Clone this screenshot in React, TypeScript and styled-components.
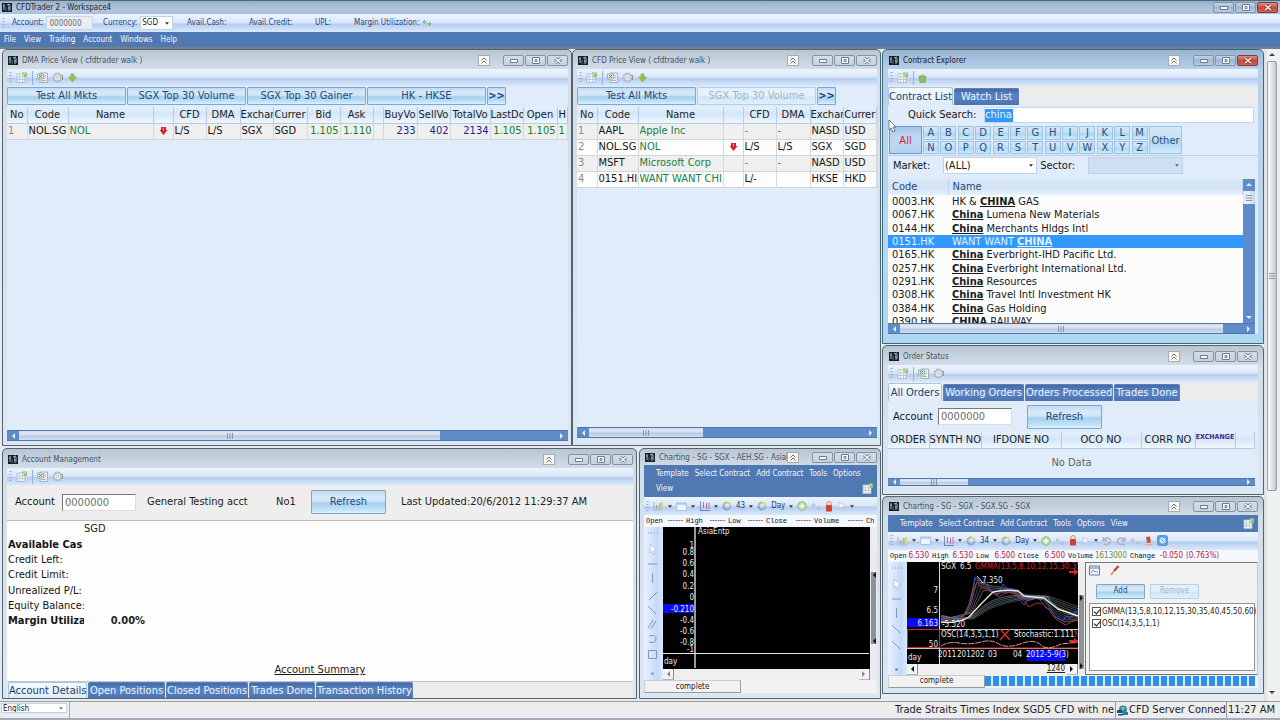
import React from 'react';
import styled, { createGlobalStyle, css } from 'styled-components';

const tahoma = '"DejaVu Sans Condensed", "DejaVu Sans", Tahoma, sans-serif';
const mono = '"Liberation Mono", monospace';

const bar = 'linear-gradient(#edf4fe 0%, #d9e6fa 48%, #b6cced 56%, #cadcf7 80%, #d9e8fd 100%)';
const glass = 'linear-gradient(#c3d9ee 0%, #d6e9fa 25%, #cfe6f9 45%, #a9cfee 55%, #bfe3f8 85%, #d8f3fd 100%)';
const tabBlue = 'linear-gradient(#4468a8 0%, #5c86c4 45%, #4a72b2 100%)';

const Global = createGlobalStyle`
  * { box-sizing: border-box; }
  body { margin: 0; background: #dce9f7; font-family: ${tahoma}; font-size: 11px; line-height: 14px; color: #222; }
  button, input, select { font: inherit; margin: 0; padding: 0; border: 0; border-radius: 0; background: none; color: inherit; }
  svg { display: block; flex: none; }
`;

/* ---------- shell ---------- */

const Page = styled.div`
  min-height: 100vh;
  display: flex;
  flex-direction: column;
`;

const AppTitle = styled.header`
  height: 14px;
  border-top: 1px solid #4c6a80;
  display: flex;
  align-items: center;
  padding: 0 2px;
  background: linear-gradient(#9ab0ca, #b2c5dc 60%, #a8c1e0);
  font: 8px/12px ${tahoma};
  color: #1d2530;
`;

const AppBar = styled.div`
  height: 18px;
  display: flex;
  align-items: center;
  padding-left: 2px;
  background: ${bar};
  font: 8px/12px ${tahoma};
  color: #24477c;
`;

const BarItem = styled.div<{ $w: number }>`
  width: ${p => p.$w}px;
  display: flex;
  align-items: center;
  gap: 3px;
  white-space: nowrap;
`;

const BarLabel = styled.label`
  padding-left: 4px;
`;

const Menu = styled.nav<{ $pad: number; $h: number }>`
  min-height: ${p => p.$h}px;
  display: flex;
  align-items: center;
  flex: none;
  padding: 0 3px 0 ${p => p.$pad}px;
  background: #5079b3;
  font: 8px/15px ${tahoma};
  color: #f2f7ff;
`;

const MenuItems = styled.div<{ $gap: number }>`
  flex: 1;
  display: flex;
  flex-wrap: wrap;
  column-gap: ${p => p.$gap}px;
`;

const MenuButton = styled.button`
  white-space: nowrap;
  line-height: 15px;
`;

const MenuCorner = styled.span`
  margin-left: auto;
  padding-top: 2px;
`;

const Desktop = styled.main`
  flex: 1;
  display: flex;
  border-top: 2px solid #7b7f86;
`;

const LeftArea = styled.div`
  flex: 1;
  min-width: 0;
  display: flex;
  flex-direction: column;
  gap: 2px;
  padding: 0 0 2px 2px;
  background: #e4eaf0;
`;

const Row = styled.div<{ $grow?: boolean; $gap?: number }>`
  display: flex;
  flex: ${p => (p.$grow ? '1 1 auto' : 'none')};
  gap: ${p => p.$gap ?? 0}px;
`;

const RightColumn = styled.div`
  width: 383px;
  display: flex;
  flex-direction: column;
  gap: 1px;
  padding-left: 1px;
  background: #e8edf2;
`;

const PageScroll = styled.div`
  width: 16px;
  display: flex;
  flex-direction: column;
  align-items: center;
  padding: 3px 0 6px;
  background: linear-gradient(90deg, #d9dee3, #f1f2f3 30%, #efefef);
`;

const PageThumb = styled.div`
  width: 10px;
  height: 430px;
  margin: 3px 0 auto;
  display: flex;
  align-items: center;
  justify-content: center;
  border: 1px solid #9b9fa4;
  border-radius: 2px;
  background: linear-gradient(90deg, #fafafa, #e4e4e6 50%, #c6c8cc);
`;

/* ---------- windows ---------- */

const Frame = styled.section<{ $flex?: number; $active?: boolean; $wide?: boolean; $foot: number }>`
  min-width: 0;
  flex: ${p => (p.$flex ? `${p.$flex} ${p.$flex} ${p.$flex}px` : 'none')};
  display: flex;
  flex-direction: column;
  padding: 0 ${p => (p.$wide ? 5 : 3)}px ${p => p.$foot}px ${p => (p.$wide ? 5 : 4)}px;
  border: 1px solid ${p => (p.$active ? '#2a6f86' : '#56636f')};
  border-radius: 5px 5px 0 0;
  background: ${p =>
    p.$active
      ? 'linear-gradient(#98b3d3, #b9d0ea 20px, #bdd6f0 60%, #b0d8f0)'
      : 'linear-gradient(#b8c6d3, #d3dee9 20px, #dbe7f3)'};
`;

const Caption = styled.div<{ $h: number; $active?: boolean }>`
  height: ${p => p.$h}px;
  flex: none;
  display: flex;
  align-items: center;
  padding-top: ${p => (p.$h > 16 ? 2 : 1)}px;
  padding-left: 1px;
  font: 8px/12px ${tahoma};
  color: ${p => (p.$active ? '#16202c' : '#46535f')};
`;

const CaptionText = styled.h2`
  flex: 1;
  min-width: 0;
  margin: 0 0 0 4px;
  overflow: hidden;
  white-space: nowrap;
  font: inherit;
`;

const Chevron = styled.button`
  width: 12px;
  height: 11px;
  flex: none;
  margin-right: 13px;
  display: grid;
  place-items: center;
  border: 1px solid #a4acb4;
  background: #f7f7ee;
`;

const Controls = styled.div`
  display: flex;
  gap: 1px;
  flex: none;
`;

const Control = styled.button<{ $red?: boolean; $hot?: boolean }>`
  width: 21px;
  height: 11px;
  display: grid;
  place-items: center;
  border: 1px solid ${p => (p.$red ? '#7c3a3c' : '#8594a5')};
  border-radius: 2px;
  background: ${p =>
    p.$red
      ? 'linear-gradient(#dc9186, #c8453a 55%, #d4664f)'
      : p.$hot
        ? 'linear-gradient(#c3d5ea, #9fb7d3 50%, #b5cde8)'
        : 'linear-gradient(#d3dde7, #c5d2df)'};
`;

const Tools = styled.div<{ $h: number }>`
  height: ${p => p.$h}px;
  flex: none;
  display: flex;
  align-items: center;
  gap: 4px;
  padding-left: 2px;
  overflow: hidden;
  background: ${bar};
  font: 8px/12px ${tahoma};
  color: #1e3c6e;
`;

const Divider = styled.span`
  width: 1px;
  height: 14px;
  background: #8fb2de;
`;

const Canvas = styled.div<{ $bg?: string }>`
  flex: 1;
  display: flex;
  flex-direction: column;
  min-width: 0;
  min-height: 0;
  background: ${p => p.$bg ?? '#e1ecfb'};
`;

const Inset = styled.div`
  padding-right: 3px;
`;

const GlassButton = styled.button<{ $w: number; $h: number; $faded?: boolean; $bold?: boolean; $small?: boolean }>`
  width: ${p => p.$w}px;
  height: ${p => p.$h}px;
  flex: none;
  overflow: hidden;
  border: 1px solid ${p => (p.$faded ? '#b5cfe9' : '#7ba7d3')};
  border-radius: 1px;
  background: ${glass};
  color: #1c4a7a;
  white-space: nowrap;
  line-height: 14px;
  ${p => p.$small && css`font: 8px/10px ${tahoma};`}
  ${p => p.$bold && css`font-weight: bold; color: #1a4087;`}
  ${p => p.$faded && css`background: linear-gradient(#e3eefa, #e6f2fc 45%, #d3e6f7 55%, #def0fb); color: #a3b4c8;`}
`;

const MarketButtons = styled.div`
  display: flex;
  gap: 1px;
  height: 21px;
  flex: none;
  padding-top: 1px;
`;

/* ---------- grids ---------- */

const Grid = styled.table`
  width: 100%;
  table-layout: fixed;
  border-collapse: collapse;
`;

const HeadCell = styled.th<{ $small?: boolean }>`
  height: 16px;
  padding: 0;
  overflow: hidden;
  border-right: 1px solid #b7cbe2;
  border-bottom: 1px solid #b7cbe2;
  background: linear-gradient(#e3effd, #d5e6f8 45%, #dcebfa 60%, #eef6fe);
  font-weight: ${p => (p.$small ? 'bold' : 'normal')};
  font-size: ${p => (p.$small ? 7 : 11)}px;
  line-height: ${p => (p.$small ? 10 : 14)}px;
  vertical-align: ${p => (p.$small ? 'top' : 'middle')};
  color: ${p => (p.$small ? '#4a2a90' : '#1c1c24')};
  white-space: nowrap;
`;

const Cell = styled.td<{ $color?: string; $right?: boolean; $alt?: boolean }>`
  height: 16px;
  padding: 0 1px;
  overflow: hidden;
  border-right: 1px solid #d5d9de;
  border-bottom: 1px solid #cfd5dc;
  background: ${p => (p.$alt ? '#efefef' : '#fdfdfd')};
  color: ${p => p.$color ?? '#151515'};
  text-align: ${p => (p.$right ? 'right' : 'left')};
  white-space: nowrap;
  line-height: 14px;
`;

const Clip = styled.div`
  overflow: hidden;
`;

const Mark = styled.span`
  display: flex;
  justify-content: center;
`;

/* ---------- scroll bars ---------- */

const HTrack = styled.div<{ $h: number }>`
  height: ${p => p.$h}px;
  flex: none;
  display: flex;
  background: #5f8bc8;
  border-top: 1px solid #4e76b0;
  border-bottom: 1px solid #4e76b0;
`;

const ArrowBox = styled.button`
  width: 12px;
  min-height: 6px;
  flex: none;
  display: grid;
  place-items: center;
`;

const UpDownBox = styled(ArrowBox)`
  height: 12px;
`;

const HThumb = styled.div<{ $share: number }>`
  flex: ${p => p.$share} ${p => p.$share} 0;
  display: flex;
  align-items: center;
  justify-content: center;
  background: linear-gradient(#cfdcee, #e1e9f4 30%, #b9cbe3 60%, #d3dff0);
`;

const HRest = styled.div<{ $share: number }>`
  flex: ${p => p.$share} ${p => p.$share} 0;
`;

const VTrack = styled.div`
  width: 12px;
  flex: none;
  display: flex;
  flex-direction: column;
  background: #5f8bc8;
`;

const VThumb = styled.div`
  height: 13px;
  margin-bottom: auto;
  display: grid;
  place-items: center;
  background: linear-gradient(90deg, #d8e3f1, #eef3f9 40%, #c3d2e6);
`;

/* ---------- tabs and forms ---------- */

const TabStrip = styled.div<{ $bottom?: boolean }>`
  height: ${p => (p.$bottom ? 17 : 19)}px;
  flex: none;
  display: flex;
  align-items: flex-end;
  gap: 1px;
  background: #ececec;
  ${p => p.$bottom && css`border-top: 1px solid #b9c6d4; padding-left: 1px;`}
`;

const Tab = styled.button<{ $on?: boolean; $w: number }>`
  width: ${p => p.$w}px;
  height: ${p => (p.$on ? 18 : 17)}px;
  max-height: 100%;
  flex: none;
  white-space: nowrap;
  border: 1px solid ${p => (p.$on ? '#a9c4e2' : '#5c7fb6')};
  border-bottom: 0;
  border-radius: 2px 2px 0 0;
  background: ${p => (p.$on ? 'linear-gradient(#f4faff, #dfecfa)' : tabBlue)};
  color: ${p => (p.$on ? '#1b3d6d' : '#edf5ff')};
`;

const Line = styled.div<{ $h: number; $pad: number; $top?: boolean }>`
  height: ${p => p.$h}px;
  flex: none;
  display: flex;
  align-items: center;
  padding-left: ${p => p.$pad}px;
  white-space: nowrap;
  ${p => p.$top && css`border-top: 1px solid #b7cfe8; padding-bottom: 4px;`}
`;

const Label = styled.label<{ $w: number }>`
  width: ${p => p.$w}px;
  flex: none;
  color: #161616;
`;

const Field = styled.input<{ $w: number; $h: number; $sunk?: boolean; $tint?: boolean }>`
  width: ${p => p.$w}px;
  flex: none;
  height: ${p => p.$h}px;
  padding-left: 2px;
  background: ${p => (p.$tint ? '#e9eef4' : '#fff')};
  color: ${p => (p.$sunk || p.$tint ? '#6c6c6c' : '#111')};
  border: 1px solid #c4d6ea;
  ${p => p.$sunk && css`border-color: #777 #ddd #ddd #777;`}
`;

const Search = styled.div`
  flex: 1;
  height: 16px;
  margin-right: 4px;
  display: flex;
  align-items: center;
  background: #fff;
  border: 1px solid #c4d6ea;
`;

const SearchInput = styled.input`
  width: 28px;
  height: 13px;
  background: #3397f6;
  color: #e9f5ff;
`;

const Picker = styled.span<{ $w: number; $h: number; $off?: boolean }>`
  width: ${p => p.$w}px;
  height: ${p => p.$h}px;
  flex: none;
  display: flex;
  align-items: center;
  padding-right: 3px;
  border: 1px solid #bcd3ec;
  background: ${p => (p.$off ? '#cfdff1' : '#fff')};
  color: #1a1a1a;
`;

const Select = styled.select`
  flex: 1;
  min-width: 0;
  height: 100%;
  padding-left: 1px;
  appearance: none;
  outline: 0;
`;

const Letters = styled.div`
  height: 30px;
  flex: none;
  display: flex;
  gap: 1px;
  padding: 1px 0 1px 1px;
`;

const LetterGrid = styled.div`
  width: 225px;
  display: grid;
  grid-template-columns: repeat(13, 1fr);
  gap: 1px;
`;

const Letter = styled.button<{ $tall?: boolean; $red?: boolean }>`
  width: ${p => (p.$tall ? 33 : 16)}px;
  border: 1px solid ${p => (p.$red ? '#6a96c8' : '#9cc2e6')};
  background: ${p =>
    p.$red ? 'linear-gradient(#a5c4e6, #c0d9f2 40%, #b4d3f0)' : 'linear-gradient(#d3e7f9, #c8e0f6 45%, #b0d4f1 55%, #cdebfb)'};
  color: ${p => (p.$red ? '#d5202c' : '#24507f')};
  line-height: 11px;
`;

const ListRow = styled.tr<{ $on?: boolean }>`
  background: ${p => (p.$on ? '#3398fb' : '#fcfcfc')};
  color: ${p => (p.$on ? '#e3f2ff' : '#1a1a1a')};
`;

const ListCell = styled.td`
  padding: 0 0 0 4px;
  line-height: 13px;
  white-space: nowrap;
`;

const ListHead = styled.th`
  height: 16px;
  padding: 0 0 0 4px;
  text-align: left;
  font-weight: normal;
  color: #24477c;
  border-right: 1px solid #bed2e9;
  background: linear-gradient(#dbe8f7, #d2e3f6 50%, #e6f2fd);
`;

const ListArea = styled.div`
  display: flex;
  height: 144px;
  overflow: hidden;
  background: #fcfcfc;
`;

const ListScroll = styled.div`
  flex: 1;
  overflow: hidden;
`;

const ListTable = styled.table`
  width: 100%;
  height: 149px;
  table-layout: fixed;
  border-collapse: collapse;
`;

const Hit = styled.b`
  text-decoration: underline;
`;

const Empty = styled.div`
  height: 29px;
  display: grid;
  place-items: center;
  color: #5c6570;
`;

const Facts = styled.table`
  height: 92px;
  width: 150px;
  table-layout: fixed;
  border-collapse: collapse;
`;

const FactName = styled.th<{ $strong?: boolean }>`
  padding: 0 0 0 1px;
  overflow: hidden;
  text-align: left;
  white-space: nowrap;
  font-weight: ${p => (p.$strong ? 'bold' : 'normal')};
  color: #151515;
`;

const FactValue = styled.td`
  padding: 0 12px 0 0;
  text-align: right;
  font-weight: bold;
`;

const CurrencyHead = styled.div`
  padding: 1px 0 0 77px;
  height: 16px;
`;

const Summary = styled.a`
  align-self: center;
  margin: auto 0 4px;
  color: #1a1a1a;
`;

/* ---------- charts ---------- */

const Metrics = styled.dl<{ $cols: string }>`
  height: 12px;
  flex: none;
  margin: 0;
  padding-left: 2px;
  display: grid;
  grid-template-columns: ${p => p.$cols};
  align-items: center;
  overflow: hidden;
  background: #f4f8fe;
`;

const Metric = styled.div`
  display: flex;
  align-items: center;
  justify-content: space-between;
  padding-right: 3px;
  white-space: nowrap;
  &:last-child { justify-content: flex-start; }
`;

const MetricName = styled.dt`
  font: 7px/10px ${mono};
  color: #111;
`;

const MetricValue = styled.dd<{ $color?: string }>`
  margin: 0;
  font: 8px/10px ${tahoma};
  color: ${p => p.$color ?? '#3a4a60'};
`;

const ChartBody = styled.div<{ $h: number }>`
  height: ${p => p.$h}px;
  flex: none;
  display: flex;
  background: #f0f0f0;
`;

const DrawTools = styled.div`
  width: 19px;
  flex: none;
  padding: 3px 0;
  background: linear-gradient(90deg, #e9f2fe, #c3d9f8 70%, #dce8fb);
`;

const Plot = styled.div`
  flex: 1;
  min-width: 0;
  display: flex;
  flex-direction: column;
`;

const PlotCanvas = styled.div`
  flex: 1;
  overflow: hidden;
  background: #000;
`;

const PlotScroll = styled.div`
  height: 11px;
  flex: none;
  display: flex;
  justify-content: space-between;
  align-items: center;
  background: #efefef;
  color: #222;
  font-size: 8px;
`;

const PlotCount = styled.span`
  margin-left: auto;
  margin-right: 2px;
  text-decoration: underline;
`;

const StepButton = styled.button`
  width: 11px;
  height: 11px;
  display: grid;
  place-items: center;
  border-right: 1px solid #8a8a8a;
  border-bottom: 1px solid #b5b5b5;
  background: #f3f3f3;
`;

const Splitter = styled.div`
  width: 7px;
  flex: none;
  display: flex;
  flex-direction: column;
  align-items: center;
  justify-content: flex-end;
  background: #ececec;
`;

const SplitGrip = styled.div<{ $h: number; $gap: number }>`
  width: 5px;
  height: ${p => p.$h}px;
  margin-bottom: ${p => p.$gap}px;
  display: flex;
  flex-direction: column;
  justify-content: space-between;
  background: #8d9299;
`;

const Side = styled.div`
  width: 173px;
  flex: none;
  display: flex;
  flex-direction: column;
  border: 1px solid #777;
  border-right-color: #c9c9c9;
  background: #f2f2f2;
`;

const SideTabs = styled.div`
  display: flex;
  gap: 9px;
  height: 17px;
  padding: 2px 3px;
`;

const SideButtons = styled.div`
  display: flex;
  gap: 5px;
  padding: 4px 10px;
`;

const Checks = styled.div`
  flex: 1;
  margin: 0 2px 3px 3px;
  padding: 2px;
  border: 1px solid #8e9298;
  background: #fff;
`;

const Check = styled.label`
  display: flex;
  align-items: center;
  gap: 1px;
  height: 12px;
  font: 8px/10px ${tahoma};
  white-space: nowrap;
`;

const Tick = styled.input`
  width: 9px;
  height: 9px;
  flex: none;
  display: grid;
  place-items: center;
  appearance: none;
  border: 1px solid #555;
  background: #fff;
  &:checked::after {
    content: '';
    width: 3px;
    height: 5px;
    margin-bottom: 2px;
    border: solid #111;
    border-width: 0 1px 1px 0;
    transform: rotate(40deg);
  }
`;

const ChartFoot = styled.div`
  height: 13px;
  flex: none;
  display: flex;
  align-items: center;
  background: #f2f2f2;
`;

const State = styled.div`
  width: 97px;
  height: 13px;
  flex: none;
  display: grid;
  place-items: center;
  border: 1px solid;
  border-color: #ccc #9a9a9a #9a9a9a #ccc;
  font: 8px/10px ${tahoma};
  color: #222;
`;

const Progress = styled.div`
  flex: 1;
  height: 10px;
  margin-right: 3px;
  background: repeating-linear-gradient(90deg, #2f8fe8 0 6px, #dbe7f3 6px 8px);
`;

/* ---------- account strip ---------- */

const Strip = styled.form`
  height: 36px;
  flex: none;
  padding: 0 0 1px 8px;
  display: flex;
  align-items: center;
  white-space: nowrap;
  background: #eee;
  border-bottom: 1px solid #bbb;
`;

const Text = styled.span<{ $w: number }>`
  width: ${p => p.$w}px;
  flex: none;
`;

const ButtonHolder = styled.span`
  display: flex;
  padding: 0 15px;
`;

/* ---------- status bar ---------- */

const Status = styled.footer`
  height: 19px;
  flex: none;
  display: flex;
  align-items: stretch;
  background: #ededed;
  border-top: 1px solid #9c9c9c;
  border-bottom: 2px solid #a6a8bc;
  white-space: nowrap;
  color: #1c1c28;
`;

const Ticker = styled.div`
  flex: 1;
  display: flex;
  justify-content: flex-end;
  align-items: center;
  padding-right: 1px;
  border-left: 1px solid #aaa;
`;

const StatusCell = styled.div<{ $w: number }>`
  width: ${p => p.$w}px;
  flex: none;
  display: flex;
  align-items: center;
  gap: 1px;
  overflow: hidden;
  padding-left: 1px;
  border-left: 1px solid #999;
`;

const Language = styled.div`
  width: 69px;
  padding: 1px;
  font: 8px/9px ${tahoma};
`;

const Pointer = styled.svg`
  position: absolute;
  left: 0;
  top: 14px;
  z-index: 2;
`;

const Anchor = styled.div`
  position: relative;
  display: flex;
  flex-direction: column;
`;

/* ---------- drawings ---------- */

const Logo = () => (
  <svg width="10" height="9" viewBox="0 0 10 9" aria-hidden="true">
    <path d="M0 0h10v9H0z" fill="#16202b" />
    <path d="M2 1v6M1 3h2M7 1v7M5 2l3-1M6 5h2" stroke="#a9b8c4" />
    <path d="M4 4v4M8.500 2v5" stroke="#4b6c88" />
  </svg>
);

const Caret = ({ color = '#333' }: { color?: string }) => (
  <svg width="4" height="3" viewBox="0 0 5 3" aria-hidden="true">
    <path d="M0 0h5L2.500 3z" fill={color} />
  </svg>
);

const Grip = () => (
  <svg width="3" height="11" viewBox="0 0 3 11" aria-hidden="true">
    <path d="M1.500 0v11" stroke="#8aa9d4" strokeWidth="2" strokeDasharray="1 2" />
  </svg>
);

const SheetIcon = () => (
  <svg width="12" height="11" viewBox="0 0 12 11" aria-hidden="true">
    <path d="M1 2h8v8.500H1z" fill="#fafcff" stroke="#b1bdc8" />
    <path d="M1 5h8M1 7.500h8M3.500 3v7M6.500 3v7" stroke="#bcc9d5" />
    <path d="M6 .5h5V5H8z" fill="#8cc46b" />
    <path d="M7 3l3-2" stroke="#d8f0c6" />
  </svg>
);

const ExcelIcon = () => (
  <svg width="11" height="11" viewBox="0 0 11 11" aria-hidden="true">
    <path d="M3 1h7.500v9.500H3z" fill="#eef3f6" stroke="#a3afb8" />
    <path d="M.5 2h6v5h-6z" fill="#dfeadf" stroke="#9eb4a4" />
    <path d="M2 3l3 3M5 3L2 6" stroke="#5f8a68" />
    <path d="M7 4h2M7 6h2M4 8.500h5" stroke="#aab4bc" />
  </svg>
);

const GearIcon = () => (
  <svg width="12" height="11" viewBox="0 0 12 11" aria-hidden="true">
    <circle cx="5.500" cy="5.500" r="4.500" fill="none" stroke="#9aa5ae" strokeDasharray="2 1" />
    <circle cx="5.500" cy="5.500" r="3.500" fill="#eff3f6" stroke="#aeb7bf" />
    <circle cx="5.500" cy="5.500" r="1.500" fill="none" stroke="#b8c0c7" />
    <path d="M10.500 3v5" stroke="#8b969f" />
  </svg>
);

const DownIcon = () => (
  <svg width="9" height="10" viewBox="0 0 9 10" aria-hidden="true">
    <path d="M3 1h3v3h2.500L4.500 9 .5 4H3z" fill="#8cc63e" stroke="#7fae55" strokeWidth=".6" />
  </svg>
);

const BasketIcon = () => (
  <svg width="9" height="10" viewBox="0 0 9 10" aria-hidden="true">
    <path d="M1 3.500h7L7 9.500H2z" fill="#8fbf4c" stroke="#74a03f" strokeWidth=".7" />
    <path d="M2.500 3.500Q4.500 0 6.500 3.500" fill="none" stroke="#86a660" />
  </svg>
);

const RedDown = () => (
  <svg width="9" height="8" viewBox="0 0 9 8" aria-hidden="true">
    <path d="M2 0h5v3H8.500L4.500 8 .5 3H2z" fill="#d3202f" />
    <path d="M3.500 1h1v3" stroke="#f08f92" fill="none" />
  </svg>
);

const SyncIcon = () => (
  <svg width="10" height="8" viewBox="0 0 10 8" aria-hidden="true">
    <path d="M1 3h4M3 1L1 3l2 2M9 5H5M7 3l2 2-2 2" fill="none" stroke="#76a96a" />
  </svg>
);

const Arrow = ({ dir, color = '#e4efff' }: { dir: 'l' | 'r' | 'u' | 'd'; color?: string }) => {
  const d = { l: 'M5 0v6L2 3z', r: 'M1 0v6l3-3z', u: 'M0 4h6L3 1z', d: 'M0 2h6L3 5z' }[dir];
  return (
    <svg width="6" height="6" viewBox="0 0 6 6" aria-hidden="true">
      <path d={d} fill={color} />
    </svg>
  );
};

const GripMark = ({ vertical }: { vertical?: boolean }) => (
  <svg width="6" height="6" viewBox="0 0 6 6" aria-hidden="true">
    <path d={vertical ? 'M0 .5h6M0 3h6M0 5.500h6' : 'M.5 0v6M3 0v6M5.500 0v6'} stroke="#8595aa" />
  </svg>
);

const DonutIcon = () => (
  <svg width="10" height="10" viewBox="0 0 10 10" aria-hidden="true">
    <g fill="none" strokeWidth="2">
      <path d="M5 1.500A3.500 3.500 0 0 1 8.500 5" stroke="#e9d26c" />
      <path d="M8.500 5A3.500 3.500 0 0 1 5 8.500" stroke="#7fb6e8" />
      <path d="M5 8.500A3.500 3.500 0 0 1 1.500 5" stroke="#a58fe0" />
      <path d="M1.500 5A3.500 3.500 0 0 1 5 1.500" stroke="#8fce86" />
    </g>
  </svg>
);

const BarsIcon = () => (
  <svg width="11" height="10" viewBox="0 0 11 10" aria-hidden="true">
    <path d="M1 1v8h9" stroke="#a9b6c8" fill="none" />
    <path d="M3 8V4h1.500v4M6 8V2h1.500v6" fill="#9db886" />
    <path d="M9 1v7" stroke="#e8d268" strokeWidth="2" />
  </svg>
);

const PaneIcon = () => (
  <svg width="11" height="9" viewBox="0 0 11 9" aria-hidden="true">
    <path d="M.5 1h10v7.500H.5z" fill="#eef4fd" stroke="#aec1df" />
    <path d="M1 2h9" stroke="#8fb0e4" />
  </svg>
);

const CandleIcon = () => (
  <svg width="11" height="10" viewBox="0 0 11 10" aria-hidden="true">
    <path d="M1.500 0v10M10 1v7" stroke="#8d86c4" />
    <path d="M4.500 1v6M7.500 2v6" stroke="#d0628e" />
    <path d="M1 9.500h10" stroke="#6f82b8" />
  </svg>
);

const PlusIcon = () => (
  <svg width="10" height="10" viewBox="0 0 10 10" aria-hidden="true">
    <circle cx="5" cy="5" r="4.300" fill="#b4dba6" stroke="#8dc07c" />
    <path d="M5 2.500v5M2.500 5h5" stroke="#fff" strokeWidth="1.500" />
  </svg>
);

const LinkIcon = () => (
  <svg width="10" height="10" viewBox="0 0 10 10" aria-hidden="true">
    <path d="M1 4h4M3 2L1 4l2 2M9 7H5M7 5l2 2-2 2" fill="none" stroke="#b3bccb" />
  </svg>
);

const LockIcon = () => (
  <svg width="8" height="11" viewBox="0 0 8 11" aria-hidden="true">
    <path d="M2 5V2.500a2 2 0 0 1 4 0V5" fill="none" stroke="#d98a52" />
    <rect x="1" y="4" width="6" height="6.500" rx="1" fill="#d2432c" />
  </svg>
);

const PointIcon = () => (
  <svg width="9" height="10" viewBox="0 0 9 10" aria-hidden="true">
    <path d="M2 1v7l2-2 1.500 3 1-.6L5.500 6H8z" fill="#fff" stroke="#a9b6cc" strokeWidth=".7" />
  </svg>
);

const UndoIcon = () => (
  <svg width="10" height="10" viewBox="0 0 10 10" aria-hidden="true">
    <path d="M1 1v3.500h4M1.500 4Q5 0 8.500 4v2Q8 8 5 8.500H2" fill="none" stroke="#b9aeb6" strokeWidth="1.300" />
  </svg>
);

const RedoIcon = () => (
  <svg width="10" height="10" viewBox="0 0 10 10" aria-hidden="true">
    <path d="M9 1v3.500H5M8.500 4Q5 0 1.500 4v2Q2 8 5 8.500h4" fill="none" stroke="#b9aeb6" strokeWidth="1.300" />
  </svg>
);

const FlagIcon = () => (
  <svg width="9" height="10" viewBox="0 0 9 10" aria-hidden="true">
    <path d="M2 1l4-.5 1 6-4 .5z" fill="#d8483c" />
    <path d="M1 8h7v1.500H1z" fill="#e8a69c" />
  </svg>
);

const BlueIcon = () => (
  <svg width="11" height="11" viewBox="0 0 11 11" aria-hidden="true">
    <rect x=".5" y=".5" width="10" height="10" rx="2" fill="#5aa0e6" stroke="#5b97d8" />
    <circle cx="5.500" cy="5.500" r="3" fill="#d4e9fb" />
    <path d="M4 4l3 3" stroke="#5b93cf" />
  </svg>
);

const EarthIcon = () => (
  <svg width="11" height="11" viewBox="0 0 11 11" aria-hidden="true">
    <circle cx="6" cy="4.500" r="4" fill="#2b8a9a" />
    <path d="M4 2h4v2L5 6z" fill="#6cc08a" />
    <path d="M0 5h5v3H0zM1 9h5v1.500H1z" fill="#1d4f73" />
    <path d="M6 7h5v3H6z" fill="#3273a0" />
  </svg>
);

const PictureIcon = () => (
  <svg width="11" height="11" viewBox="0 0 11 11" aria-hidden="true">
    <path d="M.5 1h10v9H.5z" fill="#f3f7fb" stroke="#5a7fae" />
    <path d="M1 3h9" stroke="#5a7fae" />
    <path d="M2 8l2-3 2 2 1-1 2 2" fill="none" stroke="#7a9bc4" />
  </svg>
);

const BrushIcon = () => (
  <svg width="11" height="11" viewBox="0 0 11 11" aria-hidden="true">
    <path d="M9.500 1L5 6" stroke="#c63b2c" strokeWidth="2" />
    <path d="M5 6L2 10" stroke="#d9a178" strokeWidth="2" />
  </svg>
);

const DrawGlyphs = ({ h }: { h: number }) => (
  <svg width="17" height={h} viewBox={`0 0 17 ${h}`} aria-hidden="true">
    <g fill="none" stroke="#8296bd">
      <path d="M4 3h10" strokeDasharray="1 2" />
      <path d="M6 14v9l2-2 2 4 1-1-1-4h3z" fill="#fff" stroke="#b5c4dc" />
      <path d="M4 34h9M8.500 43v10" />
      {h > 120 ? (
        <>
          <path d="M5 70l8-8M4 76l8 8" />
          <path d="M4 98l5-8M7 99l5-8M5 106q7-2 7 3t-7 3M4.500 120.500h8v8h-8z" />
          <path d="M7 143h3l-1.500 2z" />
        </>
      ) : (
        <>
          <path d="M4 60l8 8M4 76l8 8" />
          <path d="M7 104h3l-1.500 2z" fill="#445" />
        </>
      )}
    </g>
  </svg>
);

const asiaScale: [string, number][] = [
  ['1', 21], ['0.8', 28], ['0.6', 39], ['0.4', 50], ['0.2', 62], ['0', 73],
  ['-0.210', 85], ['-0.4', 96], ['-0.6', 107], ['-0.8', 118], ['-1', 125],
];

const AsiaPlot = () => (
  <svg width="206" height="141" viewBox="0 0 206 141" role="img" aria-label="AsiaEntp day chart">
    <path d="M32 0v141" stroke="#9a9a9a" strokeWidth="2" />
    <path d="M0 126.500h206" stroke="#e6e6e6" />
    <path d="M0 77h31v9H0z" fill="#0a0aff" />
    <g fill="#ececec" fontFamily={tahoma} fontSize="8">
      <text x="35" y="7">AsiaEntp</text>
      <g textAnchor="end">
        {asiaScale.map(([t, y]) => <text key={t} x="31" y={y}>{t}</text>)}
      </g>
      <text x="1" y="137">day</text>
    </g>
  </svg>
);

const slow = [0, 1, 2, 3, 4];
const fast = [0, 1, 2, 3, 4];
const slowColors = ['#7b8f88', '#5f7d78', '#4d6f87', '#7a7390', '#56695f'];
const fastColors = ['#5f8f6b', '#4f7f86', '#3f62a8', '#8a5a70', '#6f8a5c'];

const SgxPlot = () => (
  <svg width="172" height="102" viewBox="0 0 172 102" role="img" aria-label="SGX day chart">
    <path d="M32.500 0v102" stroke="#dcdcdc" />
    <g fill="none" strokeLinejoin="round">
      {slow.map(i => (
        <path
          key={i}
          d={`M34 ${53 + i * 2}Q56 ${60 - i} 66 ${53 + i}L${78 + i} ${43 + i}Q${92 + i} ${33 + i * 2} 118 ${33 + i}T142 ${38 - i}T172 ${53 - i * 2}`}
          stroke={slowColors[i]}
          strokeWidth=".7"
        />
      ))}
      {fast.map(i => (
        <path
          key={i}
          d={`M34 ${54 + i}L54 ${57 - i}L${61 + i} ${47 + i}L${68 + i * 2} ${17 + i * 3}L${73 + i * 2} ${20 + i * 2}L${85 + i} ${24 + i * 2}L98 ${26 + i}L111 ${28 + i}L120 ${35 + i}L137 ${38 - i}L${150 + i} ${56 - i * 2}L158 ${60 - i * 2}L172 ${58 - i}`}
          stroke={fastColors[i]}
          strokeWidth=".7"
        />
      ))}
      <path d="M34 57l6-1 5 3 6-5 5 1 5-10 4-8 3-22 3 2 4 5 3-2 4 6 3 4 6 3 3-7 2-4 4 5 6 0 4 6 3 5 4 5 4-5 5 -4 5 2 4 4 4 6 4 1 4 8 4 1 5 3 3-5 4 2 5-6 4 0" stroke="#4348c8" />
      <path d="M34 59l8-2 6 3 8-5 6-12 4-14 4-9 4 5 6 2 6 4 6 4 5-3 6-2 7 3 6 5 6 7 8-4 6 1 6 6 7 9 6 4 4 2 5-3 7-2" stroke="#b3302f" />
      <path d="M34 60q16 2 28-5l12-13 12-12q12-3 25-1l6 5 20 2 14 11 20 7" stroke="#f3e6e2" strokeWidth="1.400" />
      <path d="M70 14l6 7" stroke="#ddd" />
    </g>
    <path d="M33 67.500h139M0 86.500h172" stroke="#c8c8c8" />
    <path d="M.5 67.500h32v18H.5zM33 86h139" fill="none" stroke="#d02828" />
    <path d="M34 84q8-5 18-3t22-1q10-3 18 2t24-1q12-4 18 2t20-1l18-2" fill="none" stroke="#d89a94" strokeDasharray="6 1" />
    <path d="M93 67l10 11M103 67l-10 11" stroke="#d82b2b" strokeWidth="1.500" />
    <path d="M162 9h5V7l5 3-5 3v-2h-5zM162 78h5v-2l5 3-5 3v-2h-5z" fill="#e02626" />
    <path d="M0 56h32v9H0zM120 88h38v11h-38z" fill="#0a0aff" />
    <g fill="#ececec" fontFamily={tahoma} fontSize="8">
      <text x="34" y="7">SGX</text>
      <text x="53" y="7">6.5</text>
      <text x="68" y="7" fill="#c42a2a">GMMA(13,5,8,10,12,15,30,35,4</text>
      <text x="75" y="21">7.350</text>
      <text x="35" y="65">-5.520</text>
      <g textAnchor="end">
        <text x="31" y="31">7</text>
        <text x="31" y="51">6.5</text>
        <text x="31" y="64">6.163</text>
        <text x="31" y="85">50</text>
      </g>
      <text x="34" y="75">OSC(14,3,5,1,1)</text>
      <text x="107" y="75">Stochastic:1.111</text>
      <text x="167" y="75" fill="#c42a2a">N</text>
      <text x="1" y="98">day</text>
      <text x="31" y="95">2011</text>
      <text x="50" y="95">201202</text>
      <text x="81" y="95">03</text>
      <text x="106" y="95">04</text>
      <text x="119" y="95">2012-5-9(3)</text>
    </g>
  </svg>
);

/* ---------- composed parts ---------- */

const WindowButtons = ({ red, hot }: { red?: boolean; hot?: boolean }) => (
  <Controls>
    <Control $hot={hot} aria-label="Minimize">
      <svg width="8" height="4" viewBox="0 0 8 4"><path d="M.5.5h7v3h-7z" fill="#fff" stroke="#6d7b8a" /></svg>
    </Control>
    <Control $hot={hot} aria-label="Maximize">
      <svg width="8" height="7" viewBox="0 0 8 7"><path d="M.5.5h7v6h-7zM3 2.500h2v2H3z" fill="#fff" stroke="#6d7b8a" /></svg>
    </Control>
    <Control $red={red} aria-label="Close">
      <svg width="8" height="7" viewBox="0 0 8 7">
        <path d="M1 1l6 5M7 1L1 6" stroke={red ? '#8a3a36' : '#6d7b8a'} strokeWidth="3" />
        <path d="M1 1l6 5M7 1L1 6" stroke="#fff" strokeWidth="1.300" />
      </svg>
    </Control>
  </Controls>
);

type WinProps = {
  title: string;
  children: React.ReactNode;
  flex?: number;
  active?: boolean;
  wide?: boolean;
  caption?: number;
  foot: number;
};

const Win = ({ title, children, flex, active, wide, caption = 19, foot }: WinProps) => (
  <Frame $flex={flex} $active={active} $wide={wide} $foot={foot}>
    <Caption $h={caption} $active={active}>
      <Logo />
      <CaptionText>{title}</CaptionText>
      <Chevron aria-label="Roll up">
        <svg width="6" height="7" viewBox="0 0 6 7"><path d="M.5 3.500L3 1l2.500 2.500M.5 6.500L3 4l2.500 2.500" fill="none" stroke="#69727c" /></svg>
      </Chevron>
      <WindowButtons red={active} hot={active} />
    </Caption>
    {children}
  </Frame>
);

const HBar = ({ thumb, rest, h }: { thumb: number; rest: number; h: number }) => (
  <HTrack $h={h}>
    <ArrowBox aria-label="Scroll left"><Arrow dir="l" /></ArrowBox>
    <HThumb $share={thumb}><GripMark /></HThumb>
    <HRest $share={rest} />
    <ArrowBox aria-label="Scroll right"><Arrow dir="r" /></ArrowBox>
  </HTrack>
);

const green = '#178043';
const priceGreen = '#16801c';
const navy = '#221c9c';

type Column = { label: string; w?: number; color?: string; right?: boolean };

const cfdColumns: Column[] = [
  { label: 'No', w: 20, color: '#8a8a8a' },
  { label: 'Code', w: 41 },
  { label: 'Name', w: 85, color: green },
  { label: '', w: 20 },
  { label: 'CFD', w: 33 },
  { label: 'DMA', w: 34 },
  { label: 'Exchar', w: 33 },
  { label: 'Currer' },
];

const dmaColumns: Column[] = [
  ...cfdColumns.slice(0, 7),
  { label: 'Currer', w: 34 },
  { label: 'Bid', w: 33, color: priceGreen, right: true },
  { label: 'Ask', w: 33, color: priceGreen, right: true },
  { label: '', w: 10 },
  { label: 'BuyVo', w: 34, color: navy, right: true },
  { label: 'SellVo', w: 33, color: navy, right: true },
  { label: 'TotalVo', w: 40, color: navy, right: true },
  { label: 'LastDo', w: 33, color: priceGreen, right: true },
  { label: 'Open', w: 34, color: priceGreen, right: true },
  { label: 'H', color: priceGreen },
];

const dmaRows = [['1', 'NOL.SG', 'NOL', 'down', 'L/S', 'L/S', 'SGX', 'SGD', '1.105', '1.110', '', '233', '402', '2134', '1.105', '1.105', '1.']];

const cfdRows = [
  ['1', 'AAPL', 'Apple Inc', '', '-', '-', 'NASD', 'USD'],
  ['2', 'NOL.SG', 'NOL', 'down', 'L/S', 'L/S', 'SGX', 'SGD'],
  ['3', 'MSFT', 'Microsoft Corp', '', '-', '-', 'NASD', 'USD'],
  ['4', '0151.HI', 'WANT WANT CHI', '', 'L/-', '', 'HKSE', 'HKD'],
];

const PriceGrid = ({ columns, rows }: { columns: Column[]; rows: string[][] }) => (
  <Grid>
    <colgroup>
      {columns.map((c, i) => <col key={i} width={c.w} />)}
    </colgroup>
    <thead>
      <tr>{columns.map((c, i) => <HeadCell key={i}><Clip>{c.label}</Clip></HeadCell>)}</tr>
    </thead>
    <tbody>
      {rows.map((r, n) => (
        <tr key={n}>
          {r.map((v, i) => (
            <Cell key={i} $alt={n % 2 === 0} $color={v === '-' ? '#777' : columns[i].color} $right={columns[i].right}>
              {v === 'down' ? <Mark><RedDown /></Mark> : <Clip>{v}</Clip>}
            </Cell>
          ))}
        </tr>
      ))}
    </tbody>
  </Grid>
);

const WindowTools = ({ extra }: { extra: 'full' | 'gear' | 'basket' }) => (
  <Tools $h={17}>
    <Grip />
    <SheetIcon />
    <Divider />
    {extra === 'basket' ? <BasketIcon /> : <><ExcelIcon /><GearIcon /></>}
    {extra === 'full' && <DownIcon />}
  </Tools>
);

const Tabs = ({ items, bottom }: { items: [string, number][]; bottom?: boolean }) => (
  <TabStrip $bottom={bottom} role="tablist">
    {items.map(([t, w], i) => (
      <Tab key={t} role="tab" aria-selected={i === 0} $on={i === 0} $w={w}>{t}</Tab>
    ))}
  </TabStrip>
);

const contracts: [string, string, string, string][] = [
  ['0003.HK', 'HK & ', 'CHINA', ' GAS'],
  ['0067.HK', '', 'China', ' Lumena New Materials'],
  ['0144.HK', '', 'China', ' Merchants Hldgs Intl'],
  ['0151.HK', 'WANT WANT ', 'CHINA', ''],
  ['0165.HK', '', 'China', ' Everbright-IHD Pacific Ltd.'],
  ['0257.HK', '', 'China', ' Everbright International Ltd.'],
  ['0291.HK', '', 'China', ' Resources'],
  ['0308.HK', '', 'China', ' Travel Intl Investment HK'],
  ['0384.HK', '', 'China', ' Gas Holding'],
  ['0390.HK', '', 'CHINA', ' RAILWAY'],
];

const facts: [string, string, boolean][] = [
  ['Available Cas', '', true],
  ['Credit Left:', '', false],
  ['Credit Limit:', '', false],
  ['Unrealized P/L:', '', false],
  ['Equity Balance:', '', false],
  ['Margin Utiliza', '0.00%', true],
];

const chartMenu = ['Template', 'Select Contract', 'Add Contract', 'Tools', 'Options', 'View'];

const ChartTools = ({ zoom, full }: { zoom: string; full?: boolean }) => (
  <Tools $h={18}>
    <Grip />
    <BarsIcon /><Caret />
    <PaneIcon /><Caret />
    <CandleIcon /><Caret />
    <DonutIcon />{zoom}<Caret />
    <DonutIcon />Day<Caret />
    <PlusIcon />
    <LinkIcon />
    <LockIcon />
    <PointIcon /><Caret />
    {full && <><UndoIcon /><RedoIcon /><LinkIcon /><FlagIcon /><BlueIcon /></>}
  </Tools>
);

const ChartMenu = ({ tall }: { tall?: boolean }) => (
  <Menu $pad={12} $h={tall ? 32 : 17}>
    <MenuItems $gap={6}>
      {chartMenu.map(m => <MenuButton key={m}>{m}</MenuButton>)}
      <MenuCorner><SheetIcon /></MenuCorner>
    </MenuItems>
  </Menu>
);

type Quote = [string, string, string?];

const QuoteLine = ({ cols, items }: { cols: string; items: Quote[] }) => (
  <Metrics $cols={cols}>
    {items.map(([n, v, c]) => (
      <Metric key={n}>
        <MetricName>{n}</MetricName>
        <MetricValue $color={c}>{v}</MetricValue>
      </Metric>
    ))}
  </Metrics>
);

const red = '#b8203c';

export default function App() {
  return (
    <Page>
      <Global />
      <AppTitle>
        <Logo />
        <CaptionText as="h1">CFDTrader 2 - Workspace4</CaptionText>
        <WindowButtons red hot />
      </AppTitle>
      <AppBar>
        <BarItem $w={101}>
          <Grip />
          <BarLabel htmlFor="top-account">Account:</BarLabel>
          <Field id="top-account" $w={47} $h={14} $tint defaultValue="0000000" />
        </BarItem>
        <BarItem $w={84}>
          <label htmlFor="top-currency">Currency:</label>
          <Picker $w={33} $h={14}>
            <Select id="top-currency" defaultValue="SGD"><option>SGD</option></Select>
            <Caret />
          </Picker>
        </BarItem>
        <BarItem $w={62}>Avail.Cash:</BarItem>
        <BarItem $w={66}>Avail.Credit:</BarItem>
        <BarItem $w={39}>UPL:</BarItem>
        <BarItem $w={90}>Margin Utilization: <SyncIcon /></BarItem>
      </AppBar>
      <Menu $pad={4} $h={15}>
        <MenuItems $gap={8}>
          {['File', 'View', 'Trading', 'Account', 'Windows', 'Help'].map(m => <MenuButton key={m}>{m}</MenuButton>)}
        </MenuItems>
      </Menu>

      <Desktop>
        <LeftArea>
          <Row $grow>
            <Win title="DMA Price View ( cfdtrader walk )" flex={570} foot={4}>
              <WindowTools extra="full" />
              <Canvas>
                <MarketButtons>
                  <GlassButton $w={119} $h={18}>Test All Mkts</GlassButton>
                  <GlassButton $w={119} $h={18}>SGX Top 30 Volume</GlassButton>
                  <GlassButton $w={119} $h={18}>SGX Top 30 Gainer</GlassButton>
                  <GlassButton $w={119} $h={18}>HK - HKSE</GlassButton>
                  <GlassButton $w={19} $h={18} $bold>&gt;&gt;</GlassButton>
                </MarketButtons>
                <PriceGrid columns={dmaColumns} rows={dmaRows} />
              </Canvas>
              <HBar thumb={421} rest={116} h={11} />
            </Win>
            <Win title="CFD Price View ( cfdtrader walk )" flex={309} foot={7}>
              <WindowTools extra="full" />
              <Canvas>
                <MarketButtons>
                  <GlassButton $w={119} $h={18}>Test All Mkts</GlassButton>
                  <GlassButton $w={119} $h={18} $faded>SGX Top 30 Volume</GlassButton>
                  <GlassButton $w={19} $h={18} $bold>&gt;&gt;</GlassButton>
                </MarketButtons>
                <PriceGrid columns={cfdColumns} rows={cfdRows} />
              </Canvas>
              <HBar thumb={114} rest={161} h={11} />
            </Win>
          </Row>
          <Row $gap={2}>
            <Win title="Account Management" flex={635} foot={0}>
              <WindowTools extra="gear" />
              <Canvas $bg="#fdfdfd">
                <Strip>
                  <Label htmlFor="account" $w={47}>Account</Label>
                  <Field id="account" $w={74} $h={17} $sunk defaultValue="0000000" />
                  <Text $w={11} />
                  <Text $w={129}>General Testing acct</Text>
                  <Text $w={20}>No1</Text>
                  <ButtonHolder>
                    <GlassButton type="button" $w={75} $h={24}>Refresh</GlassButton>
                  </ButtonHolder>
                  <span>Last Updated:20/6/2012 11:29:37 AM</span>
                </Strip>
                <CurrencyHead>SGD</CurrencyHead>
                <Facts>
                  <colgroup><col width="77" /><col /></colgroup>
                  <tbody>
                    {facts.map(([n, v, strong]) => (
                      <tr key={n}>
                        <FactName $strong={strong}>{n}</FactName>
                        <FactValue>{v}</FactValue>
                      </tr>
                    ))}
                  </tbody>
                </Facts>
                <Summary href="#summary">Account Summary</Summary>
                <Tabs bottom items={[['Account Details', 79], ['Open Positions', 77], ['Closed Positions', 82], ['Trades Done', 66], ['Transaction History', 97]]} />
              </Canvas>
            </Win>
            <Win title="Charting - SG - SGX - AEH.SG - AsiaEntp" flex={242} foot={5} caption={16}>
              <ChartMenu tall />
              <ChartTools zoom="43" />
              <QuoteLine
                cols="40px 42px 38px 48px 52px 40px"
                items={[['Open', '------'], ['High', '------'], ['Low', '------'], ['Close', '------'], ['Volume', '------'], ['Ch', '']]}
              />
              <ChartBody $h={153}>
                <DrawTools><DrawGlyphs h={147} /></DrawTools>
                <Plot>
                  <PlotCanvas><AsiaPlot /></PlotCanvas>
                  <PlotScroll>
                    <StepButton aria-label="Earlier"><Arrow dir="l" color="#888" /></StepButton>
                    <StepButton aria-label="Later"><Arrow dir="r" color="#888" /></StepButton>
                  </PlotScroll>
                </Plot>
                <Splitter>
                  <SplitGrip $h={72} $gap={36}><Arrow dir="l" color="#111" /><Arrow dir="l" color="#111" /></SplitGrip>
                </Splitter>
              </ChartBody>
              <ChartFoot><State>complete</State></ChartFoot>
            </Win>
          </Row>
        </LeftArea>

        <RightColumn>
          <Win title="Contract Explorer" active wide foot={9}>
            <WindowTools extra="basket" />
            <Canvas>
              <Tabs items={[['Contract List', 65], ['Watch List', 65]]} />
              <Anchor>
                <Pointer width="9" height="14" viewBox="0 0 9 14" aria-hidden="true">
                  <path d="M1 1v10l2-2 2 4 2-1-2-4h3z" fill="#fff" stroke="#555" strokeWidth=".8" />
                </Pointer>
                <Line $h={20} $pad={20}>
                  <Label htmlFor="quick" $w={76}>Quick Search:</Label>
                  <Search><SearchInput id="quick" defaultValue="china" /></Search>
                </Line>
                <Letters>
                  <Letter $tall $red>All</Letter>
                  <LetterGrid>
                    {'ABCDEFGHIJKLMNOPQRSTUVWXYZ'.split('').map(l => <Letter key={l}>{l}</Letter>)}
                  </LetterGrid>
                  <Letter $tall>Other</Letter>
                </Letters>
                <Line $h={24} $pad={5} $top>
                  <Label htmlFor="market" $w={50}>Market:</Label>
                  <Picker $w={94} $h={17}>
                    <Select id="market" defaultValue="(ALL)"><option>(ALL)</option></Select>
                    <Caret />
                  </Picker>
                  <Label htmlFor="sector" $w={51}>&nbsp;Sector:</Label>
                  <Picker $w={95} $h={17} $off>
                    <Select id="sector" disabled />
                    <Caret color="#667" />
                  </Picker>
                </Line>
              </Anchor>
              <Inset>
                <ListArea>
                  <ListScroll>
                    <ListTable>
                      <colgroup><col width="60" /><col /></colgroup>
                      <thead>
                        <tr><ListHead>Code</ListHead><ListHead>Name</ListHead></tr>
                      </thead>
                      <tbody>
                        {contracts.map(([code, before, hit, after]) => (
                          <ListRow key={code} $on={code === '0151.HK'}>
                            <ListCell>{code}</ListCell>
                            <ListCell>{before}<Hit>{hit}</Hit>{after}</ListCell>
                          </ListRow>
                        ))}
                      </tbody>
                    </ListTable>
                  </ListScroll>
                  <VTrack>
                    <UpDownBox aria-label="Scroll up"><Arrow dir="u" /></UpDownBox>
                    <VThumb><GripMark vertical /></VThumb>
                    <UpDownBox aria-label="Scroll down"><Arrow dir="d" /></UpDownBox>
                  </VTrack>
                </ListArea>
                <HBar thumb={320} rest={20} h={11} />
              </Inset>
            </Canvas>
          </Win>

          <Win title="Order Status" wide foot={8}>
            <WindowTools extra="gear" />
            <Canvas>
              <Tabs items={[['All Orders', 54], ['Working Orders', 81], ['Orders Processed', 88], ['Trades Done', 66]]} />
              <Line $h={31} $pad={5}>
                <Label htmlFor="order-account" $w={45}>Account</Label>
                <Field id="order-account" $w={74} $h={17} $sunk defaultValue="0000000" />
                <ButtonHolder>
                  <GlassButton $w={75} $h={24}>Refresh</GlassButton>
                </ButtonHolder>
              </Line>
              <Inset>
                <Grid>
                  <colgroup>
                    <col width="41" /><col width="52" /><col width="80" /><col width="80" /><col width="54" /><col width="40" /><col />
                  </colgroup>
                  <thead>
                    <tr>
                      <HeadCell>ORDER</HeadCell>
                      <HeadCell><Clip>SYNTH NO</Clip></HeadCell>
                      <HeadCell>IFDONE NO</HeadCell>
                      <HeadCell>OCO NO</HeadCell>
                      <HeadCell>CORR NO</HeadCell>
                      <HeadCell $small>EXCHANGE</HeadCell>
                      <HeadCell />
                    </tr>
                  </thead>
                </Grid>
                <Empty>No Data</Empty>
                <HBar thumb={68} rest={276} h={8} />
              </Inset>
            </Canvas>
          </Win>

          <Win title="Charting - SG - SGX - SGX.SG - SGX" wide foot={5} caption={18}>
            <ChartMenu />
            <ChartTools zoom="34" full />
            <QuoteLine
              cols="42px 44px 42px 50px 62px 56px 1fr"
              items={[
                ['Open', '6.530', red],
                ['High', '6.530', red],
                ['Low', '6.500', red],
                ['Close', '6.500', red],
                ['Volume', '1613000', '#6a8a3a'],
                ['Change', '-0.050', red],
                ['', '(0.763%)', red],
              ]}
            />
            <ChartBody $h={113}>
              <DrawTools><DrawGlyphs h={107} /></DrawTools>
              <Plot>
                <PlotCanvas><SgxPlot /></PlotCanvas>
                <PlotScroll>
                  <StepButton aria-label="Earlier"><Arrow dir="l" color="#111" /></StepButton>
                  <PlotCount>1240</PlotCount>
                  <StepButton aria-label="Later"><Arrow dir="r" color="#111" /></StepButton>
                </PlotScroll>
              </Plot>
              <Splitter>
                <SplitGrip $h={74} $gap={6}><Arrow dir="r" color="#111" /><Arrow dir="r" color="#111" /></SplitGrip>
              </Splitter>
              <Side>
                <SideTabs><PictureIcon /><BrushIcon /></SideTabs>
                <SideButtons>
                  <GlassButton $w={49} $h={15} $small>Add</GlassButton>
                  <GlassButton $w={49} $h={15} $small $faded>Remove</GlassButton>
                </SideButtons>
                <Checks>
                  <Check><Tick type="checkbox" defaultChecked />GMMA(13,5,8,10,12,15,30,35,40,45,50,60)</Check>
                  <Check><Tick type="checkbox" defaultChecked />OSC(14,3,5,1,1)</Check>
                </Checks>
              </Side>
            </ChartBody>
            <ChartFoot><State>complete</State><Progress /></ChartFoot>
          </Win>
        </RightColumn>

        <PageScroll>
          <Arrow dir="u" color="#444" />
          <PageThumb><GripMark vertical /></PageThumb>
          <Arrow dir="d" color="#444" />
        </PageScroll>
      </Desktop>

      <Status>
        <Language>
          <Picker $w={66} $h={10}>
            <Select aria-label="Language" defaultValue="English"><option>English</option></Select>
            <Caret color="#777" />
          </Picker>
        </Language>
        <Ticker>Trade Straits Times Index SGD5 CFD with ne</Ticker>
        <StatusCell $w={111}><EarthIcon />CFD Server Conned</StatusCell>
        <StatusCell $w={54}>11:27 AM</StatusCell>
      </Status>
    </Page>
  );
}
